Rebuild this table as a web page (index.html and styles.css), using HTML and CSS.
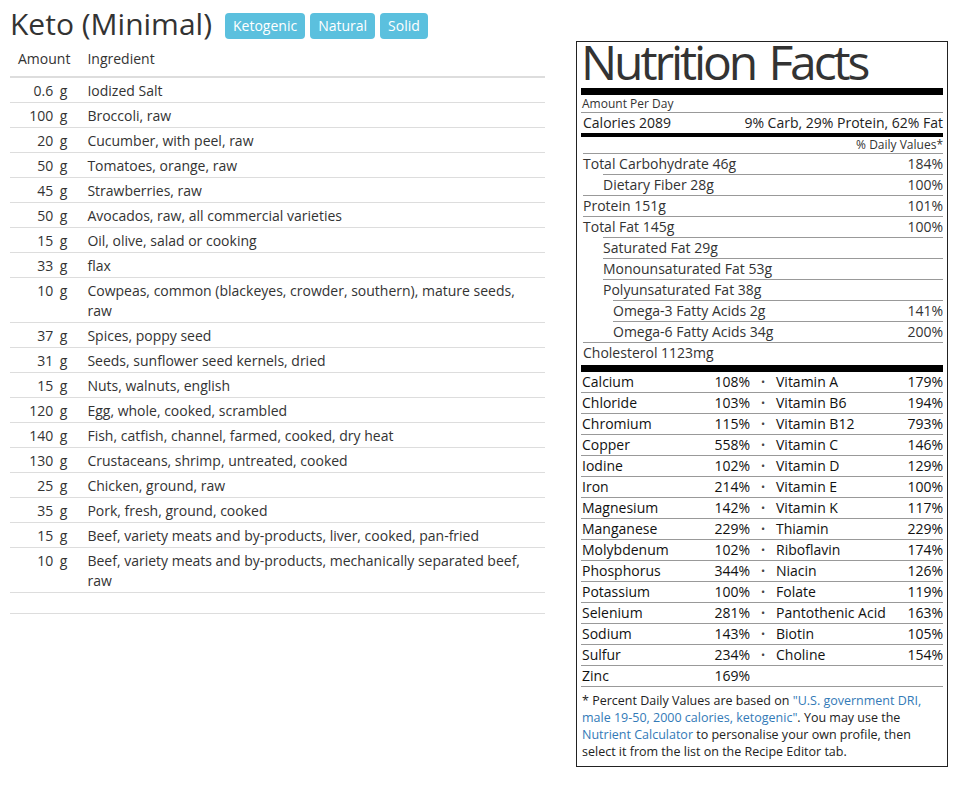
FILE: index.html
```html
<!DOCTYPE html>
<html>
<head>
<meta charset="utf-8">
<link rel="stylesheet" href="styles.css">
</head>
<body>
<div class="page">
  <div class="main">
    <div class="title-row">
      <h1 class="title">Keto (Minimal)</h1>
      <span class="badge">Ketogenic</span>
      <span class="badge">Natural</span>
      <span class="badge">Solid</span>
    </div>
    <table class="ingredients">
      <thead>
        <tr><th class="amt">Amount</th><th class="ing">Ingredient</th></tr>
      </thead>
      <tbody>
        <tr><td class="amt">0.6 g</td><td class="ing">Iodized Salt</td></tr>
        <tr><td class="amt">100 g</td><td class="ing">Broccoli, raw</td></tr>
        <tr><td class="amt">20 g</td><td class="ing">Cucumber, with peel, raw</td></tr>
        <tr><td class="amt">50 g</td><td class="ing">Tomatoes, orange, raw</td></tr>
        <tr><td class="amt">45 g</td><td class="ing">Strawberries, raw</td></tr>
        <tr><td class="amt">50 g</td><td class="ing">Avocados, raw, all commercial varieties</td></tr>
        <tr><td class="amt">15 g</td><td class="ing">Oil, olive, salad or cooking</td></tr>
        <tr><td class="amt">33 g</td><td class="ing">flax</td></tr>
        <tr><td class="amt">10 g</td><td class="ing">Cowpeas, common (blackeyes, crowder, southern), mature seeds, raw</td></tr>
        <tr><td class="amt">37 g</td><td class="ing">Spices, poppy seed</td></tr>
        <tr><td class="amt">31 g</td><td class="ing">Seeds, sunflower seed kernels, dried</td></tr>
        <tr><td class="amt">15 g</td><td class="ing">Nuts, walnuts, english</td></tr>
        <tr><td class="amt">120 g</td><td class="ing">Egg, whole, cooked, scrambled</td></tr>
        <tr><td class="amt">140 g</td><td class="ing">Fish, catfish, channel, farmed, cooked, dry heat</td></tr>
        <tr><td class="amt">130 g</td><td class="ing">Crustaceans, shrimp, untreated, cooked</td></tr>
        <tr><td class="amt">25 g</td><td class="ing">Chicken, ground, raw</td></tr>
        <tr><td class="amt">35 g</td><td class="ing">Pork, fresh, ground, cooked</td></tr>
        <tr><td class="amt">15 g</td><td class="ing">Beef, variety meats and by-products, liver, cooked, pan-fried</td></tr>
        <tr><td class="amt">10 g</td><td class="ing">Beef, variety meats and by-products, mechanically separated beef, raw</td></tr>
      </tbody>
      <tfoot>
        <tr><td class="empty" colspan="2"></td></tr>
      </tfoot>
    </table>
  </div>

  <aside class="label">
    <div class="label-title">Nutrition Facts</div>
    <div class="bar-thick"></div>
    <div class="per-day">Amount Per Day</div>
    <div class="calories"><span>Calories 2089</span><span>9% Carb, 29% Protein, 62% Fat</span></div>
    <div class="bar-mid"></div>
    <div class="dv-head">% Daily Values*</div>
    <div class="nrows">
      <div class="nrow"><span>Total Carbohydrate 46g</span><span>184%</span></div>
      <div class="nrow sub"><span>Dietary Fiber 28g</span><span>100%</span></div>
      <div class="nrow"><span>Protein 151g</span><span>101%</span></div>
      <div class="nrow"><span>Total Fat 145g</span><span>100%</span></div>
      <div class="nrow sub"><span>Saturated Fat 29g</span><span></span></div>
      <div class="nrow sub"><span>Monounsaturated Fat 53g</span><span></span></div>
      <div class="nrow sub"><span>Polyunsaturated Fat 38g</span><span></span></div>
      <div class="nrow subsub"><span>Omega-3 Fatty Acids 2g</span><span>141%</span></div>
      <div class="nrow subsub"><span>Omega-6 Fatty Acids 34g</span><span>200%</span></div>
      <div class="nrow"><span>Cholesterol 1123mg</span><span></span></div>
    </div>
    <div class="bar-thick"></div>
    <div class="vrows">
      <div class="vrow"><span>Calcium</span><span class="p">108%</span><span class="dot">•</span><span>Vitamin A</span><span class="p">179%</span></div>
      <div class="vrow"><span>Chloride</span><span class="p">103%</span><span class="dot">•</span><span>Vitamin B6</span><span class="p">194%</span></div>
      <div class="vrow"><span>Chromium</span><span class="p">115%</span><span class="dot">•</span><span>Vitamin B12</span><span class="p">793%</span></div>
      <div class="vrow"><span>Copper</span><span class="p">558%</span><span class="dot">•</span><span>Vitamin C</span><span class="p">146%</span></div>
      <div class="vrow"><span>Iodine</span><span class="p">102%</span><span class="dot">•</span><span>Vitamin D</span><span class="p">129%</span></div>
      <div class="vrow"><span>Iron</span><span class="p">214%</span><span class="dot">•</span><span>Vitamin E</span><span class="p">100%</span></div>
      <div class="vrow"><span>Magnesium</span><span class="p">142%</span><span class="dot">•</span><span>Vitamin K</span><span class="p">117%</span></div>
      <div class="vrow"><span>Manganese</span><span class="p">229%</span><span class="dot">•</span><span>Thiamin</span><span class="p">229%</span></div>
      <div class="vrow"><span>Molybdenum</span><span class="p">102%</span><span class="dot">•</span><span>Riboflavin</span><span class="p">174%</span></div>
      <div class="vrow"><span>Phosphorus</span><span class="p">344%</span><span class="dot">•</span><span>Niacin</span><span class="p">126%</span></div>
      <div class="vrow"><span>Potassium</span><span class="p">100%</span><span class="dot">•</span><span>Folate</span><span class="p">119%</span></div>
      <div class="vrow"><span>Selenium</span><span class="p">281%</span><span class="dot">•</span><span>Pantothenic Acid</span><span class="p">163%</span></div>
      <div class="vrow"><span>Sodium</span><span class="p">143%</span><span class="dot">•</span><span>Biotin</span><span class="p">105%</span></div>
      <div class="vrow"><span>Sulfur</span><span class="p">234%</span><span class="dot">•</span><span>Choline</span><span class="p">154%</span></div>
      <div class="vrow"><span>Zinc</span><span class="p">169%</span><span></span><span></span><span></span></div>
    </div>
    <p class="foot">
      <span class="fl">* Percent Daily Values are based on <a href="#">"U.S. government DRI,</a></span>
      <span class="fl"><a href="#">male 19-50, 2000 calories, ketogenic"</a>. You may use the</span>
      <span class="fl"><a href="#">Nutrient Calculator</a> to personalise your own profile, then</span>
      <span class="fl">select it from the list on the Recipe Editor tab.</span>
    </p>
  </aside>
</div>
</body>
</html>
```

FILE: styles.css
```css
html, body {
  margin: 0;
  padding: 0;
  background: #fff;
}
body {
  font-family: "Open Sans", "DejaVu Sans", sans-serif;
  font-size: 14px;
  line-height: 20px;
  color: #333;
}
.page {
  display: flex;
  align-items: flex-start;
  padding: 0 12px 0 10px;
}
.main {
  width: 535px;
  flex: none;
}
.title-row {
  display: flex;
  align-items: flex-start;
  gap: 5px;
  height: 44px;
}
.title {
  margin: 6px 8px 0 0;
  font-size: 30px;
  line-height: 36px;
  font-weight: normal;
  color: #333;
}
.badge {
  display: inline-block;
  margin-top: 13px;
  background: #5bc0de;
  color: #fff;
  font-size: 14px;
  line-height: 20px;
  padding: 3px 8px;
  border-radius: 4px;
}
.ingredients {
  width: 100%;
  border-collapse: collapse;
}
.ingredients th {
  font-weight: normal;
  text-align: left;
  padding: 5px 8px 7px;
  border-bottom: 2px solid #ddd;
}
.ingredients td {
  padding: 3px 8px 1px;
  border-top: 1px solid #ddd;
  vertical-align: top;
}
.ingredients tbody tr:first-child td {
  border-top: 0;
}
.ingredients th.amt {
  width: 52px;
  text-align: right;
  white-space: nowrap;
}
.ingredients td.amt {
  text-align: right;
  white-space: nowrap;
  padding-left: 4px;
  padding-right: 11px;
  word-spacing: 3px;
}
.ingredients .ing {
  padding-left: 9px;
}
.ingredients td.empty {
  padding: 0;
  height: 20px;
  border-top: 1px solid #ddd;
  border-bottom: 1px solid #ddd;
}

.label {
  margin-left: auto;
  margin-top: 41px;
  width: 372px;
  box-sizing: border-box;
  border: 1px solid #222;
  padding: 4px 4px 6px 4px;
  color: #333;
}
.label-title {
  font-size: 48px;
  line-height: 31px;
  margin: 0 0 11px 0;
  letter-spacing: -3.1px;
  word-spacing: 4px;
  color: #333;
  white-space: nowrap;
}
.bar-thick {
  height: 7px;
  background: #000;
}
.bar-mid {
  height: 4px;
  background: #000;
}
.per-day {
  font-size: 12px;
  line-height: 17px;
  margin-bottom: -1px;
  border-bottom: 1px solid #999;
  padding-left: 1px;
}
.calories {
  display: flex;
  justify-content: space-between;
  padding-left: 2px;
  color: #222;
  margin-top: 1px;
}
.dv-head {
  font-size: 12px;
  line-height: 16px;
  text-align: right;
  border-bottom: 1px solid #999;
  margin-left: 2px;
}
.nrows {
  padding-bottom: 2px;
}
.nrow {
  display: flex;
  justify-content: space-between;
  border-top: 1px solid #999;
  margin-left: 2px;
}
.nrow:first-child {
  border-top: 0;
}
.nrow.sub {
  margin-left: 22px;
}
.nrow.subsub {
  margin-left: 32px;
}
.vrows {
  color: #111;
}
.vrow {
  display: grid;
  grid-template-columns: 109px 59px 26px 1fr 40px;
  border-top: 1px solid #999;
  padding-left: 1px;
  white-space: nowrap;
}
.vrow:first-child {
  border-top: 0;
}
.vrow:last-child {
  border-bottom: 1px solid #999;
}
.vrow .p {
  text-align: right;
}
.vrow .dot {
  text-align: center;
  font-size: 11px;
  color: #444;
}
.foot {
  margin: 0;
  padding: 5px 0 0 1px;
  font-size: 12.5px;
  line-height: 17px;
  color: #222;
}
.fl {
  display: block;
  height: 17px;
  white-space: nowrap;
}
.foot a {
  color: #337ab7;
  text-decoration: none;
}
```
